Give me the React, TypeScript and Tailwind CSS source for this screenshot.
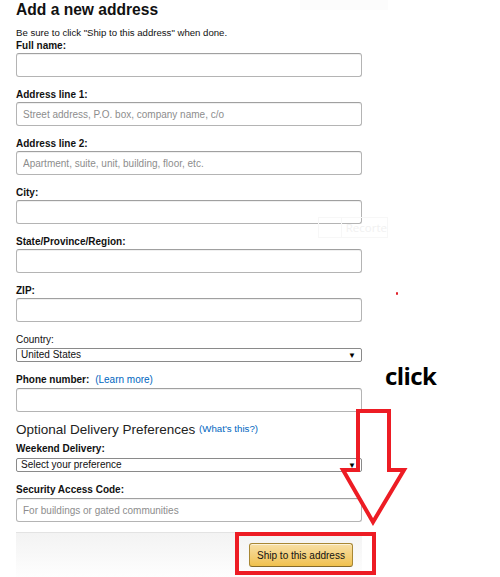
import React from "react";

interface FieldProps {
  label: React.ReactNode;
  placeholder?: string;
  bold?: boolean;
}

function TextField({ label, placeholder, bold = true }: FieldProps) {
  return (
    <div className="mb-[12px]">
      <label className={`block text-[10px] leading-[12px] text-[#111] ${bold ? "font-bold" : ""}`}>
        {label}
      </label>
      <input
        type="text"
        placeholder={placeholder}
        className="mt-[1px] block w-full h-[24px] px-[6px] text-[10px] text-[#111] placeholder:text-[#8d8d8d] bg-white border border-[#b4b4b4] border-t-[#a0a0a0] rounded-[3px] shadow-[inset_0_1px_0_rgba(0,0,0,0.06)] outline-none"
      />
    </div>
  );
}

function SelectBox({ value }: { value: string }) {
  return (
    <div className="relative h-[14px] w-full border border-[#8a8a8a] rounded-[2px] bg-white flex items-center">
      <span className="pl-[4px] text-[10px] leading-[12px] text-[#111]">{value}</span>
      <span className="absolute right-[5px] top-[2px] text-[8px] leading-[9px] text-black">▼</span>
    </div>
  );
}

export default function App() {
  return (
    <div className="relative w-[500px] h-[577px] bg-white overflow-hidden font-['Liberation_Sans',Arial,sans-serif] text-[#111]">
      {/* faint leftovers from the original capture */}
      <div className="absolute left-[300px] top-0 w-[88px] h-[10px] bg-[#fcfcfc]" />
      <div className="absolute left-[318px] top-[217px] w-[70px] h-[21px] border border-[#f7f7f7] flex">
        <div className="w-[27px] border-r border-[#f7f7f7]" />
        <span className="pl-[4px] font-['Open_Sans',sans-serif] text-[11.5px] leading-[19px] text-[#f1f1f1]">
          Recorte
        </span>
      </div>

      <div className="pl-4 w-[362px]">
        <h1 className="text-[15.6px] leading-[19px] font-bold pt-[0.3px] text-[#111]">Add a new address</h1>
        <p className="mt-[8.2px] text-[9.6px] leading-[12px] text-[#111]">
          Be sure to click "Ship to this address" when done.
        </p>

        <div className="mt-[0.9px]">
          <TextField label="Full name:" />
          <TextField label="Address line 1:" placeholder="Street address, P.O. box, company name, c/o" />
          <TextField label="Address line 2:" placeholder="Apartment, suite, unit, building, floor, etc." />
          <TextField label="City:" />
          <TextField label="State/Province/Region:" />
          <TextField label="ZIP:" />

          <div className="mb-[12.7px]">
            <label className="block text-[10px] leading-[12px] text-[#111]">Country:</label>
            <div className="mt-[1.3px]">
              <SelectBox value="United States" />
            </div>
          </div>

          <div>
            <label className="block text-[10px] leading-[12px] text-[#111] font-bold">
              Phone number:{" "}
              <span className="font-normal text-[#0066c0] pl-[3px]">(Learn more)</span>
            </label>
            <input
              type="text"
              className="mt-[2px] block w-full h-[24px] px-[6px] text-[10px] bg-white border border-[#b4b4b4] border-t-[#a0a0a0] rounded-[3px] shadow-[inset_0_1px_0_rgba(0,0,0,0.06)] outline-none"
            />
          </div>
        </div>

        <h2 className="mt-[9px] text-[13.5px] leading-[16px] text-[#222]">
          Optional Delivery Preferences{" "}
          <span className="text-[9.7px] text-[#0066c0] align-[2px]">(What's this?)</span>
        </h2>

        <div className="mt-[4.7px]">
          <label className="block text-[10px] leading-[12px] font-bold">Weekend Delivery:</label>
          <div className="mt-[2.7px]">
            <SelectBox value="Select your preference" />
          </div>
        </div>

        <div className="mt-[12.3px]">
          <label className="block text-[10px] leading-[12px] font-bold">Security Access Code:</label>
          <input
            type="text"
            placeholder="For buildings or gated communities"
            className="mt-[2.3px] block w-full h-[24px] px-[6px] text-[10px] placeholder:text-[#8d8d8d] bg-white border border-[#b4b4b4] border-t-[#a0a0a0] rounded-[3px] shadow-[inset_0_1px_0_rgba(0,0,0,0.06)] outline-none"
          />
        </div>

        <div className="mt-[10px] h-[50px] border-t border-[#e3e3e3] bg-gradient-to-b from-[#f3f3f3] to-white flex justify-end pt-[10px] pr-[9px]">
          <button className="h-[24px] w-[104px] rounded-[3px] border border-[#a88734] border-b-[#846a29] bg-gradient-to-b from-[#f7dfa5] to-[#f0c14b] text-[10px] text-[#111] shadow-[inset_0_1px_0_rgba(255,255,255,0.6)]">
            Ship to this address
          </button>
        </div>
      </div>

      {/* annotation layer */}
      <span className="absolute left-[385px] top-[360px] font-['Open_Sans',sans-serif] font-bold text-[24px] leading-[32px] tracking-[-0.6px] text-black">
        click
      </span>
      <div className="absolute left-[396px] top-[292px] w-[2px] h-[3px] rounded-full bg-[#e0202a]" />
      <svg className="absolute left-0 top-0 pointer-events-none" width="500" height="577" viewBox="0 0 500 577">
        <polygon
          points="358,411 389,411 389,470 404,470 373,522 343,470 358,470"
          fill="none"
          stroke="#ed1c24"
          strokeWidth="4"
          strokeLinejoin="miter"
        />
      </svg>
      <div className="absolute left-[235px] top-[532px] w-[141px] h-[43px] border-[4px] border-[#ed1c24]" />
    </div>
  );
}
